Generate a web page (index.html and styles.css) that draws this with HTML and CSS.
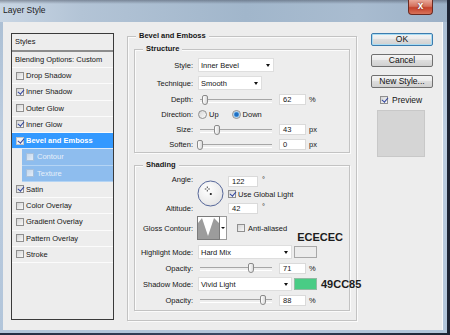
FILE: index.html
```html
<!DOCTYPE html>
<html lang="en">

<head>
    <meta charset="UTF-8">
    <title>Layer Style</title>
    <link rel="stylesheet" href="styles.css">
</head>

<body>
    <div class="window">
        <div class="titlebar">
            <span class="title">Layer Style</span>
            <span class="close-btn">x</span>
        </div>

        <div class="content">
            <!-- Styles list -->
            <ul class="styles-list">
                <li class="list-head">Styles</li>
                <li class="list-blend">Blending Options: Custom</li>
                <li class="list-item"><span class="cb"></span>Drop Shadow</li>
                <li class="list-item"><span class="cb on"></span>Inner Shadow</li>
                <li class="list-item"><span class="cb"></span>Outer Glow</li>
                <li class="list-item"><span class="cb on"></span>Inner Glow</li>
                <li class="list-item selected"><span class="cb on"></span>Bevel and Emboss</li>
                <li class="list-item sub"><span class="cb"></span>Contour</li>
                <li class="list-item sub"><span class="cb"></span>Texture</li>
                <li class="list-item"><span class="cb on"></span>Satin</li>
                <li class="list-item"><span class="cb"></span>Color Overlay</li>
                <li class="list-item"><span class="cb"></span>Gradient Overlay</li>
                <li class="list-item"><span class="cb"></span>Pattern Overlay</li>
                <li class="list-item"><span class="cb"></span>Stroke</li>
            </ul>

            <!-- Bevel and Emboss settings -->
            <fieldset class="group outer">
                <legend>Bevel and Emboss</legend>

                <fieldset class="group inner structure">
                    <legend>Structure</legend>
                    <div class="row tall">
                        <span class="label">Style:</span>
                        <span class="select w-style">Inner Bevel<i class="arrow"></i></span>
                    </div>
                    <div class="row tall">
                        <span class="label">Technique:</span>
                        <span class="select w-tech">Smooth<i class="arrow"></i></span>
                    </div>
                    <div class="row">
                        <span class="label">Depth:</span>
                        <span class="slider"><i class="thumb" style="left: 6.5%"></i></span>
                        <span class="field">62</span><span class="unit">%</span>
                    </div>
                    <div class="row">
                        <span class="label">Direction:</span>
                        <span class="radio"></span><span class="opt first">Up</span>
                        <span class="radio on"></span><span class="opt">Down</span>
                    </div>
                    <div class="row">
                        <span class="label">Size:</span>
                        <span class="slider"><i class="thumb" style="left: 23%"></i></span>
                        <span class="field">43</span><span class="unit">px</span>
                    </div>
                    <div class="row">
                        <span class="label">Soften:</span>
                        <span class="slider"><i class="thumb" style="left: 0%"></i></span>
                        <span class="field">0</span><span class="unit">px</span>
                    </div>
                </fieldset>

                <fieldset class="group inner shading">
                    <legend>Shading</legend>
                    <div class="angle">
                        <div class="angle-labels">
                            <span>Angle:</span>
                            <span class="alt-label">Altitude:</span>
                        </div>
                        <svg class="dial" width="27" height="27" viewBox="0 0 27 27">
                            <defs>
                                <radialGradient id="dialFill" cx="0.4" cy="0.35" r="0.7">
                                    <stop offset="0" stop-color="#ffffff"/>
                                    <stop offset="1" stop-color="#e4e4e4"/>
                                </radialGradient>
                            </defs>
                            <circle cx="13.5" cy="13.5" r="12.5" fill="url(#dialFill)" stroke="#56679a"/>
                            <circle cx="13.8" cy="14" r="1.1" fill="#1a1a1a"/>
                            <path d="M10.3 6.5v1.6M10.3 9.9v1.6M7.8 9h1.6M11.2 9h1.6" stroke="#333" stroke-width="0.9"/>
                        </svg>
                        <div class="angle-values">
                            <div class="vrow"><span class="field wide">122</span><span class="deg">°</span></div>
                            <div class="vrow check"><span class="cb on"></span><span class="cb-text">Use Global Light</span></div>
                            <div class="vrow alt"><span class="field wide">42</span><span class="deg">°</span></div>
                        </div>
                    </div>

                    <div class="row gloss">
                        <span class="label">Gloss Contour:</span>
                        <span class="contour">
                            <svg class="contour-img" width="23" height="24" viewBox="0 0 21 22">
                                <polygon points="0,22 0,6 4,1 10,19 16,1 21,6 21,22" fill="#9c9c9c"/>
                            </svg>
                            <span class="contour-drop"><i class="arrow small"></i></span>
                        </span>
                        <span class="cb anti"></span><span class="cb-text">Anti-aliased</span>
                        <span class="note">ECECEC</span>
                    </div>

                    <div class="row mode first-mode">
                        <span class="label">Highlight Mode:</span>
                        <span class="select w-mode">Hard Mix<i class="arrow"></i></span>
                        <span class="swatch light"></span>
                    </div>
                    <div class="row opacity">
                        <span class="label">Opacity:</span>
                        <span class="slider"><i class="thumb" style="left: 71%"></i></span>
                        <span class="field">71</span><span class="unit">%</span>
                    </div>
                    <div class="row mode">
                        <span class="label">Shadow Mode:</span>
                        <span class="select w-mode">Vivid Light<i class="arrow"></i></span>
                        <span class="swatch green"></span>
                        <span class="note">49CC85</span>
                    </div>
                    <div class="row opacity">
                        <span class="label">Opacity:</span>
                        <span class="slider"><i class="thumb" style="left: 88%"></i></span>
                        <span class="field">88</span><span class="unit">%</span>
                    </div>
                </fieldset>
            </fieldset>

            <!-- Dialog buttons -->
            <div class="buttons">
                <button class="btn default">OK</button>
                <button class="btn">Cancel</button>
                <button class="btn">New Style...</button>
                <div class="preview"><span class="cb on"></span><span class="cb-text">Preview</span></div>
                <div class="preview-box"></div>
            </div>
        </div>
    </div>
</body>

</html>
```

FILE: styles.css
```css
* {
    margin: 0;
    padding: 0;
    box-sizing: border-box;
    font-family: 'Liberation Sans', Arial, sans-serif;
}

body {
    width: 450px;
    height: 335px;
    overflow: hidden;
    background: linear-gradient(90deg, #242d42 0%, #3a4863 50%, #1d2434 100%);
    font-size: 7.5px;
    color: #161616;
}

.window {
    width: 447px;
    height: 333px;
    display: flex;
    flex-direction: column;
    padding: 0 4px 3px 3px;
    background: linear-gradient(180deg, #a9bdd2 0%, #bccde0 40%, #b2c5da 100%);
}

/* Title bar */
.titlebar {
    height: 22px;
    flex: none;
    display: flex;
    justify-content: space-between;
    align-items: flex-start;
    margin: 0 -4px 0 -3px;
    padding: 0 14px 0 3px;
    background:
        linear-gradient(180deg, rgba(55, 62, 78, 0.45) 0, rgba(55, 62, 78, 0) 4px),
        linear-gradient(90deg, #c9d6e4 0%, #b3c4d6 18%, #a1b6cb 55%, #a9bcd0 80%, #9cb1c7 100%);
}

.title {
    line-height: 21px;
    font-size: 8.5px;
    color: #1c1c1c;
}

.close-btn {
    width: 25px;
    height: 15px;
    border: 1px solid #6b2b22;
    border-top: 0;
    border-radius: 0 0 4px 4px;
    background: linear-gradient(#e9a899, #d4705c 45%, #c4412b 55%, #d8735a);
    color: #fff;
    font-weight: bold;
    font-size: 10px;
    line-height: 12px;
    text-align: center;
    text-shadow: 0 0 2px #5a1a10;
}

.content {
    flex: 1;
    display: flex;
    align-items: flex-start;
    padding-left: 8px;
    background: #ededed;
    border-right: 1px solid #fafafa;
}

/* Styles list */
.styles-list {
    list-style: none;
    flex: none;
    width: 103px;
    height: 287px;
    margin-top: 11px;
    border: 1px solid #3a3a3a;
    background: #ededed;
}

.list-head {
    height: 18px;
    line-height: 16px;
    padding-left: 3px;
    border-bottom: 2px solid #8c8c8c;
}

.list-blend {
    height: 16px;
    line-height: 15px;
    padding-left: 3px;
    border-bottom: 1px solid #fbfbfb;
}

.list-item {
    height: 16.25px;
    display: flex;
    align-items: center;
    padding-left: 4px;
    border-bottom: 1px solid #fbfbfb;
}

.list-item .cb {
    margin-right: 2px;
}

.list-item.selected {
    background: #3399ff;
    color: #fff;
    font-weight: bold;
    border-bottom-color: #dcebfb;
}

.list-item.sub {
    margin-left: 10px;
    background: #8ebdee;
    color: #e6eff9;
    border-bottom-color: #b4d4f4;
}

.list-item.sub .cb {
    margin-right: 3px;
    border-color: #a6c0dc;
    background: linear-gradient(135deg, #c4d7ec, #e2ecf7);
}

/* Checkbox and radio */
.cb {
    position: relative;
    flex: none;
    width: 8px;
    height: 8px;
    border: 1px solid #8f8f8f;
    background: linear-gradient(135deg, #d5d5d5, #f8f8f8);
}

.cb.on::after {
    content: "";
    position: absolute;
    left: 2px;
    top: -1px;
    width: 2.5px;
    height: 5px;
    border: solid #3347a0;
    border-width: 0 1.5px 1.5px 0;
    transform: rotate(40deg);
}

.selected .cb {
    background: #f4f4f4;
    border-color: #c4c4c4;
}

.cb-text {
    margin-left: 2px;
    white-space: nowrap;
}

.radio {
    flex: none;
    width: 9px;
    height: 9px;
    border-radius: 50%;
    border: 1px solid #8e8e8e;
    background: linear-gradient(135deg, #d6d6d6, #fafafa);
}

.radio.on {
    background: radial-gradient(circle, #1e6fc4 0, #1e6fc4 1.6px, #6fb0e6 2.5px, #eef4fa 3.5px);
}

.opt {
    margin-left: 2px;
}

.opt.first {
    margin-right: 13px;
}

/* Group boxes */
.group {
    min-width: 0;
    border: 1px solid #c3c3c3;
    box-shadow: inset 1px 1px 0 #fbfbfb, 1px 1px 0 #fbfbfb;
}

.group legend {
    line-height: 12px;
    font-weight: bold;
    padding: 0 3px;
    background: #ededed;
}

.outer {
    flex: none;
    width: 230px;
    margin: 8px 0 0 13px;
    padding: 1px 6px 9px 6px;
}

.outer > legend {
    margin-left: 2px;
}

.inner {
    width: 216px;
    padding: 0 2px;
}

.inner > legend {
    margin-left: 6px;
}

.structure {
    padding-top: 1px;
}

.shading {
    margin-top: 6px;
    padding-top: 4px;
    padding-bottom: 3px;
}

/* Rows */
.row {
    display: flex;
    align-items: center;
    height: 15px;
}

.row.tall {
    height: 18px;
}

.label {
    flex: none;
    width: 56px;
    margin-right: 5px;
    display: flex;
    justify-content: flex-end;
    white-space: nowrap;
}

.select {
    flex: none;
    height: 14px;
    display: flex;
    align-items: center;
    justify-content: space-between;
    padding: 0 3px 0 2px;
    background: #fff;
    border: 1px solid #dedede;
}

.w-style {
    width: 76px;
}

.w-tech {
    width: 64px;
}

.w-mode {
    width: 94px;
}

.arrow {
    width: 0;
    height: 0;
    border-left: 2.5px solid transparent;
    border-right: 2.5px solid transparent;
    border-top: 3px solid #111;
}

.arrow.small {
    border-left-width: 2px;
    border-right-width: 2px;
    border-top-width: 2.5px;
}

.slider {
    position: relative;
    flex: none;
    width: 72px;
    height: 10px;
    margin-left: 2px;
}

.slider::before {
    content: "";
    position: absolute;
    left: 0;
    right: 0;
    top: 4px;
    height: 2px;
    border-top: 1px solid #a6a6a6;
    border-bottom: 1px solid #fff;
}

.thumb {
    position: absolute;
    top: 0;
    width: 6px;
    height: 10px;
    margin-left: -3px;
    border: 1px solid #8a8a8a;
    border-radius: 2px 2px 3px 3px;
    background: linear-gradient(90deg, #fff, #dadada);
}

.field {
    flex: none;
    width: 27px;
    height: 11px;
    margin-left: 7px;
    padding-left: 3px;
    line-height: 9px;
    background: #fff;
    border: 1px solid #dadada;
}

.field.wide {
    width: 30px;
    margin-left: 0;
}

.unit {
    margin-left: 3px;
}

/* Angle / altitude */
.angle {
    display: flex;
    align-items: flex-start;
    height: 40px;
}

.angle-labels {
    flex: none;
    width: 56px;
    margin-right: 4px;
    display: flex;
    flex-direction: column;
    align-items: flex-end;
    line-height: 9px;
}

.alt-label {
    margin-top: 20px;
}

.dial {
    flex: none;
    margin-top: 5px;
}

.angle-values {
    display: flex;
    flex-direction: column;
    margin-left: 4px;
}

.vrow {
    display: flex;
    align-items: center;
    height: 13px;
}

.vrow.check {
    height: 12px;
}

.vrow.alt {
    margin-top: 2px;
}

.deg {
    margin-left: 4px;
    align-self: flex-start;
    line-height: 9px;
}

/* Gloss contour */
.row.gloss {
    height: 24px;
    margin-top: 1px;
}

.contour {
    display: flex;
    flex: none;
    margin-left: -1px;
    height: 24px;
}

.contour-img {
    border: 1px solid #7b7b7b;
    background: #fff;
}

.contour-drop {
    width: 7px;
    height: 24px;
    display: flex;
    align-items: center;
    justify-content: center;
    border: 1px solid #9a9a9a;
    border-left: 0;
    background: #fff;
}

.cb.anti {
    margin-left: 10px;
}

.gloss .cb-text {
    margin-left: 3px;
}

.note {
    font-size: 11px;
    font-weight: bold;
    line-height: 10px;
    color: #1c1c1c;
    white-space: nowrap;
}

.gloss .note {
    align-self: flex-end;
    margin: 0 0 -2px 10px;
}

.row.mode {
    height: 18px;
}

.row.first-mode {
    margin-top: 3px;
}

.row.opacity {
    height: 14px;
}

.swatch {
    flex: none;
    width: 23px;
    height: 12px;
    margin-left: 2px;
    border: 1px solid #a8a8a8;
}

.swatch.light {
    background: #ececec;
}

.swatch.green {
    background: #49cc85;
    border-color: #92b9a2;
}

.mode .note {
    margin-left: 4px;
}

/* Buttons */
.buttons {
    flex: none;
    width: 62px;
    margin: 11px 0 0 14px;
    display: flex;
    flex-direction: column;
}

.btn {
    height: 13px;
    margin-bottom: 8px;
    border: 1px solid #707070;
    border-radius: 2px;
    background: linear-gradient(#f4f4f4, #ebebeb 45%, #dddddd 50%, #d0d0d0);
    font-size: 8.5px;
    line-height: 11px;
    color: #111;
    text-align: center;
}

.btn.default {
    border-color: #3c7cae;
    box-shadow: inset 0 0 0 1px #a9dcf3;
}

.preview {
    display: flex;
    align-items: center;
    height: 8px;
    padding-left: 9px;
    font-size: 8.5px;
}

.preview .cb-text {
    margin-left: 4px;
}

.preview-box {
    width: 48px;
    height: 47px;
    margin: 6px 0 0 6px;
    background: #d5d5d5;
    border: 1px solid #c8c8c8;
}
```
